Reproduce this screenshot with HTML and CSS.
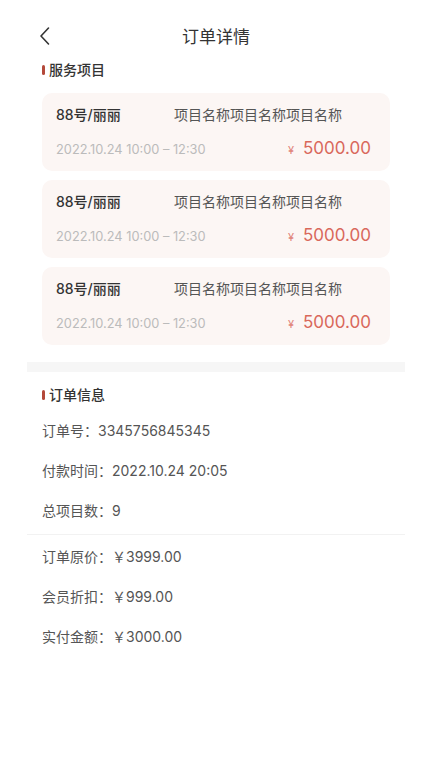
FILE: index.html
```html
<!DOCTYPE html>
<html lang="zh-CN">

<head>
    <meta charset="UTF-8">
    <meta name="viewport" content="width=device-width, initial-scale=1.0">
    <title>订单详情</title>
    <link rel="stylesheet" href="styles.css">
</head>

<body>
    <div class="page">
        <div class="header">
            <svg class="back" width="12" height="20" viewBox="0 0 12 20">
                <path d="M9.5 2 L2 10 L9.5 18" fill="none" stroke="#333" stroke-width="1.6" stroke-linecap="round" stroke-linejoin="round" />
            </svg>
            <div class="title">订单详情</div>
        </div>

        <div class="section service-section">
            <div class="section-title">服务项目</div>
            <div class="card-list">
                <div class="service-card">
                    <div class="card-row">
                        <span class="tech">88号/丽丽</span>
                        <span class="item-name">项目名称项目名称项目名称</span>
                    </div>
                    <div class="card-row">
                        <span class="time">2022.10.24 10:00 – 12:30</span>
                        <span class="price"><small>¥</small>5000.00</span>
                    </div>
                </div>
                <div class="service-card">
                    <div class="card-row">
                        <span class="tech">88号/丽丽</span>
                        <span class="item-name">项目名称项目名称项目名称</span>
                    </div>
                    <div class="card-row">
                        <span class="time">2022.10.24 10:00 – 12:30</span>
                        <span class="price"><small>¥</small>5000.00</span>
                    </div>
                </div>
                <div class="service-card">
                    <div class="card-row">
                        <span class="tech">88号/丽丽</span>
                        <span class="item-name">项目名称项目名称项目名称</span>
                    </div>
                    <div class="card-row">
                        <span class="time">2022.10.24 10:00 – 12:30</span>
                        <span class="price"><small>¥</small>5000.00</span>
                    </div>
                </div>
            </div>
        </div>

        <div class="gap-band"></div>

        <div class="section info-section">
            <div class="section-title">订单信息</div>
            <div class="info-group">
                <div class="info-row">订单号：3345756845345</div>
                <div class="info-row">付款时间：2022.10.24 20:05</div>
                <div class="info-row">总项目数：9</div>
            </div>
            <div class="divider"></div>
            <div class="info-group">
                <div class="info-row">订单原价：￥3999.00</div>
                <div class="info-row">会员折扣：￥999.00</div>
                <div class="info-row">实付金额：￥3000.00</div>
            </div>
        </div>
    </div>
</body>

</html>
```

FILE: styles.css
```css
body {
    margin: 0;
    background: #fff;
    font-family: Inter, "Noto Sans CJK SC", sans-serif;
    color: #333;
}

.page {
    padding: 0 27px;
}

.header {
    position: relative;
    height: 46px;
    padding-top: 12px;
    display: flex;
    align-items: center;
    justify-content: center;
}

.back {
    position: absolute;
    left: 12px;
    top: 26px;
}

.title {
    font-size: 17px;
    color: #333;
}

.section-title {
    display: flex;
    align-items: center;
    margin-left: 15px;
    height: 20px;
    line-height: 20px;
    font-size: 14px;
    font-weight: 500;
    color: #333;
}

.section-title::before {
    content: "";
    width: 3px;
    height: 10px;
    border-radius: 2px;
    background: #b4493a;
    margin-right: 4px;
}

.service-section .section-title {
    margin-top: 2px;
}

.card-list {
    display: flex;
    flex-direction: column;
    gap: 9px;
    margin-top: 13px;
    padding: 0 15px;
}

.service-card {
    height: 78px;
    box-sizing: border-box;
    padding: 12px 19px 0 14px;
    background: #fcf6f4;
    border-radius: 10px;
}

.card-row {
    display: flex;
    align-items: baseline;
}

.card-row + .card-row {
    margin-top: 12px;
    justify-content: space-between;
}

.tech {
    width: 118px;
    font-size: 14px;
    font-weight: 500;
    line-height: 20px;
    color: #333;
}

.item-name {
    font-size: 14px;
    line-height: 20px;
    color: #555;
}

.time {
    font-size: 12.8px;
    color: #bbb;
}

.price {
    font-size: 17px;
    line-height: 22px;
    color: #d9685b;
}

.price small {
    font-size: 11px;
    margin-right: 9px;
    color: #e08378;
}

.gap-band {
    height: 10px;
    margin-top: 17px;
    background: #f6f6f6;
}

.info-section .section-title {
    margin-top: 13px;
}

.info-group {
    padding: 0 15px;
}

.info-section .section-title + .info-group {
    margin-top: 6px;
}

.info-row {
    height: 40px;
    line-height: 40px;
    font-size: 14px;
    color: #555;
}

.divider {
    height: 1px;
    margin: 3px 0 2px;
    background: #f2f2f2;
}
```
